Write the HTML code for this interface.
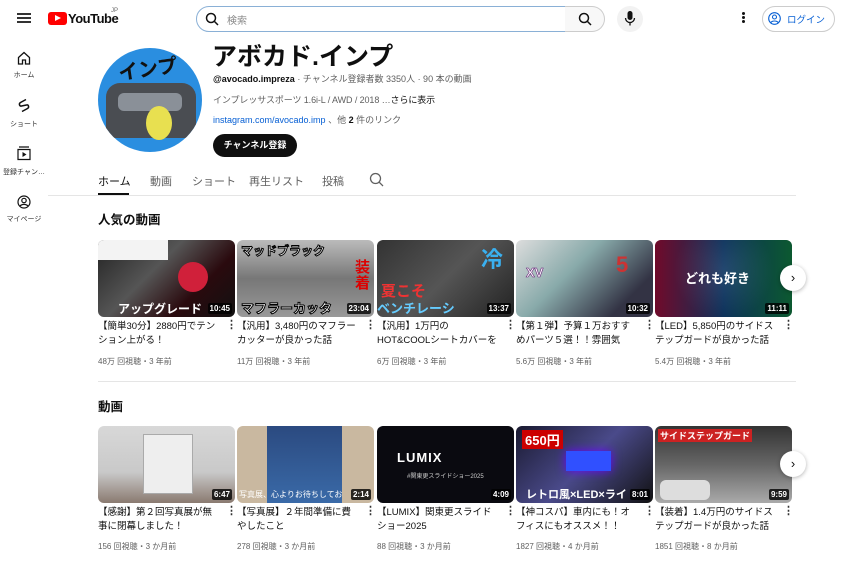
<!DOCTYPE html>
<html><head><meta charset="utf-8"><style>
*{margin:0;padding:0;box-sizing:border-box}
body{width:844px;height:563px;overflow:hidden;background:#fff;font-family:"Liberation Sans","Noto Sans CJK JP",sans-serif;color:#0f0f0f;position:relative}
.a{position:absolute}
.side div{position:absolute;width:48px;text-align:center;font-size:7px;color:#333}
.th{position:absolute;width:137px;height:77px;border-radius:6px;overflow:hidden}
.dur{position:absolute;right:3px;bottom:3px;background:rgba(0,0,0,.8);color:#fff;font-size:8px;font-weight:bold;padding:1px 2px;border-radius:2px}
.t{position:absolute;width:123px;height:28px;overflow:hidden;font-size:9.5px;line-height:14px;color:#0f0f0f}
.m{position:absolute;font-size:8px;color:#606060}
.dots{position:absolute;font-size:11px;font-weight:bold;color:#333}
.nx{position:absolute;width:26px;height:26px;border-radius:50%;background:#fff;box-shadow:0 1px 4px rgba(0,0,0,.3);text-align:center;line-height:25px;font-size:13px}
</style></head><body>
<!-- header -->
<div class="a" style="left:17px;top:13px;width:14px;height:2px;background:#333;box-shadow:0 4px 0 #333,0 8px 0 #333"></div>
<div class="a" style="left:48px;top:12px;width:19px;height:13px;background:#f00;border-radius:3px"></div>
<div class="a" style="left:55px;top:15px;width:0;height:0;border-left:6px solid #fff;border-top:3.5px solid transparent;border-bottom:3.5px solid transparent"></div>
<div class="a" style="left:68px;top:11px;font-size:13px;font-weight:bold;letter-spacing:-0.5px">YouTube</div>
<div class="a" style="left:111px;top:8px;font-size:6px;color:#666">JP</div>
<div class="a" style="left:196px;top:6px;width:370px;height:26px;border:1px solid #8ab0d6;border-radius:13px 0 0 13px"></div>
<svg class="a" style="left:205px;top:12px" width="14" height="14"><circle cx="6" cy="6" r="4.5" fill="none" stroke="#111" stroke-width="1.5"/><path d="M9.5 9.5L13 13" stroke="#111" stroke-width="1.5"/></svg>
<div class="a" style="left:227px;top:12px;font-size:10px;color:#888">検索</div>
<div class="a" style="left:565px;top:6px;width:40px;height:26px;border:1px solid #ccc;border-left:none;border-radius:0 13px 13px 0;background:#f8f8f8"></div>
<svg class="a" style="left:578px;top:12px" width="14" height="14"><circle cx="6" cy="6" r="4.5" fill="none" stroke="#111" stroke-width="1.5"/><path d="M9.5 9.5L13 13" stroke="#111" stroke-width="1.5"/></svg>
<div class="a" style="left:617px;top:6px;width:26px;height:26px;border-radius:50%;background:#f2f2f2"></div>
<svg class="a" style="left:624px;top:11px" width="12" height="16"><rect x="3.5" y="0" width="5" height="9" rx="2.5" fill="#111"/><path d="M1.5 7a4.5 4.5 0 009 0M6 11.5v3" stroke="#111" stroke-width="1.3" fill="none"/></svg>
<div class="a" style="left:742px;top:12px;width:3px;height:3px;background:#111;border-radius:50%;box-shadow:0 4px 0 #111,0 8px 0 #111"></div>
<div class="a" style="left:762px;top:6px;width:73px;height:26px;border:1px solid #ccc;border-radius:13px"></div>
<svg class="a" style="left:768px;top:12px" width="13" height="13"><circle cx="6.5" cy="6.5" r="5.8" fill="none" stroke="#065fd4" stroke-width="1.1"/><circle cx="6.5" cy="5" r="2" fill="none" stroke="#065fd4" stroke-width="1.1"/><path d="M2.8 10.5c1.5-2 5.9-2 7.4 0" stroke="#065fd4" fill="none" stroke-width="1.1"/></svg>
<div class="a" style="left:787px;top:12px;font-size:9.5px;color:#065fd4">ログイン</div>
<!-- sidebar -->
<div class="side">
<svg class="a" style="left:17px;top:51px" width="14" height="14"><path d="M1.5 6.5L7 1.5l5.5 5V13h-4V9h-3v4h-4z" fill="none" stroke="#111" stroke-width="1.3"/></svg>
<div style="left:0;top:70px">ホーム</div>
<svg class="a" style="left:17px;top:98px" width="14" height="15"><path d="M9 1.5L3.5 4.5c-2 1.2-1 4 1 3.5M5 13.5l5.5-3c2-1.2 1-4-1-3.5M4.5 8L9.5 7" fill="none" stroke="#111" stroke-width="1.5"/></svg>
<div style="left:0;top:119px">ショート</div>
<svg class="a" style="left:17px;top:146px" width="14" height="15"><path d="M2 1h10M1 3.5h12v10H1z" fill="none" stroke="#111" stroke-width="1.2"/><path d="M5.5 6v5l4-2.5z" fill="#111"/></svg>
<div style="left:0;top:167px">登録チャン…</div>
<svg class="a" style="left:17px;top:195px" width="14" height="14"><circle cx="7" cy="7" r="6" fill="none" stroke="#111" stroke-width="1.2"/><circle cx="7" cy="5.5" r="2.2" fill="none" stroke="#111" stroke-width="1.2"/><path d="M3 11c2-2.2 6-2.2 8 0" fill="none" stroke="#111" stroke-width="1.2"/></svg>
<div style="left:0;top:214px">マイページ</div>
</div>
<!-- channel -->
<div class="a" style="left:98px;top:48px;width:104px;height:104px;border-radius:50%;background:#2a8ee0;overflow:hidden">
<div class="a" style="left:8px;top:35px;width:90px;height:55px;background:#4a4d52;border-radius:14px 14px 6px 6px"></div>
<div class="a" style="left:20px;top:45px;width:64px;height:18px;background:#8a9098;border-radius:6px"></div>
<div class="a" style="left:48px;top:58px;width:26px;height:34px;background:#e8e050;border-radius:50%"></div>
<div class="a" style="left:20px;top:5px;font-size:20px;font-weight:bold;color:#111;transform:rotate(-8deg)">インプ</div>
</div>
<div class="a" style="left:212px;top:37px;font-size:25px;font-weight:bold">アボカド.インプ</div>
<div class="a" style="left:213px;top:72px;font-size:9px;color:#606060"><b style="color:#0f0f0f;font-weight:bold">@avocado.impreza</b> · チャンネル登録者数 3350人 · 90 本の動画</div>
<div class="a" style="left:213px;top:93px;font-size:9px;color:#606060;letter-spacing:-0.1px">インプレッサスポーツ 1.6i-L / AWD / 2018 …<span style="color:#0f0f0f">さらに表示</span></div>
<div class="a" style="left:213px;top:113px;font-size:9px;color:#606060"><span style="color:#065fd4">instagram.com/avocado.imp</span> 、他 <b style="color:#0f0f0f">2</b> 件のリンク</div>
<div class="a" style="left:213px;top:134px;width:84px;height:23px;background:#0f0f0f;border-radius:12px;color:#fff;font-size:9px;font-weight:bold;text-align:center;line-height:23px">チャンネル登録</div>
<!-- tabs -->
<div class="a" style="left:98px;top:173px;font-size:11px;color:#0f0f0f">ホーム</div>
<div class="a" style="left:150px;top:173px;font-size:11px;color:#606060">動画</div>
<div class="a" style="left:192px;top:173px;font-size:11px;color:#606060">ショート</div>
<div class="a" style="left:249px;top:173px;font-size:11px;color:#606060">再生リスト</div>
<div class="a" style="left:322px;top:173px;font-size:11px;color:#606060">投稿</div>
<svg class="a" style="left:369px;top:172px" width="15" height="15"><circle cx="6.5" cy="6.5" r="5" fill="none" stroke="#606060" stroke-width="1.3"/><path d="M10 10l4 4" stroke="#606060" stroke-width="1.3"/></svg>
<div class="a" style="left:98px;top:193px;width:31px;height:2px;background:#0f0f0f"></div>
<div class="a" style="left:48px;top:195px;width:748px;height:1px;background:#e5e5e5"></div>
<div class="a" style="left:98px;top:209px;font-size:12.5px;font-weight:bold">人気の動画</div>
<div class="a" style="left:98px;top:381px;width:698px;height:1px;background:#e5e5e5"></div>
<div class="a" style="left:98px;top:396px;font-size:12.5px;font-weight:bold">動画</div>

<!-- row1 -->
<div class="th" style="left:98px;top:240px;background:linear-gradient(135deg,#222 0%,#555 40%,#2a0a0e 70%,#111)"><div class="a" style="left:0;top:0;width:70px;height:20px;background:#f3f3f3"></div><div class="a" style="left:80px;top:22px;width:30px;height:30px;border-radius:50%;background:#d0203a"></div><div class="a" style="left:20px;top:60px;color:#fff;font-weight:bold;font-size:12px">アップグレード</div><span class="dur">10:45</span></div>
<div class="th" style="left:237px;top:240px;background:linear-gradient(180deg,#bbb,#777 50%,#999)"><div class="a" style="left:4px;top:2px;color:#fff;font-size:12px;font-weight:bold;-webkit-text-stroke:1px #000">マッドブラック</div><div class="a" style="left:4px;top:58px;color:#fff;font-size:13px;font-weight:bold;-webkit-text-stroke:1px #000">マフラーカッタ</div><div class="a" style="left:118px;top:20px;color:#d00;font-size:15px;font-weight:bold;width:16px;line-height:16px">装着</div><span class="dur">23:04</span></div>
<div class="th" style="left:377px;top:240px;background:linear-gradient(135deg,#333,#555 50%,#222)"><div class="a" style="left:104px;top:2px;color:#3ab0f0;font-size:22px;font-weight:bold">冷</div><div class="a" style="left:4px;top:40px;color:#e33;font-size:15px;font-weight:bold">夏こそ</div><div class="a" style="left:0;top:58px;color:#6cf;font-size:13px;font-weight:bold">ベンチレーシ</div><span class="dur">13:37</span></div>
<div class="th" style="left:516px;top:240px;background:linear-gradient(135deg,#ddd,#8aa 40%,#334 80%)"><div class="a" style="left:100px;top:12px;color:#c33;font-size:22px;font-weight:bold">5</div><div class="a" style="left:10px;top:25px;color:#fff;font-size:13px;font-weight:bold;-webkit-text-stroke:.6px #627">XV</div><span class="dur">10:32</span></div>
<div class="th" style="left:655px;top:240px;background:radial-gradient(circle at 50% 40%,#333,#111 60%),#111"><div class="a" style="left:0;top:0;width:137px;height:77px;background:linear-gradient(90deg,rgba(255,0,80,.4),rgba(0,120,255,.3),rgba(0,255,120,.3))"></div><div class="a" style="left:30px;top:28px;color:#fff;font-size:13px;font-weight:bold">どれも好き</div><span class="dur">11:11</span></div>
<div class="nx" style="left:780px;top:265px">›</div>

<div class="t" style="left:98px;top:320px">【簡単30分】2880円でテンション上がる！</div>
<div class="t" style="left:237px;top:320px">【汎用】3,480円のマフラーカッターが良かった話</div>
<div class="t" style="left:377px;top:320px">【汎用】1万円のHOT&amp;COOLシートカバーを装着してみ…</div>
<div class="t" style="left:516px;top:320px">【第１弾】予算１万おすすめパーツ５選！！雰囲気向…</div>
<div class="t" style="left:655px;top:320px">【LED】5,850円のサイドステップガードが良かった話</div>
<div class="dots" style="left:226px;top:318px">⋮</div><div class="dots" style="left:365px;top:318px">⋮</div><div class="dots" style="left:505px;top:318px">⋮</div><div class="dots" style="left:644px;top:318px">⋮</div><div class="dots" style="left:783px;top:318px">⋮</div>
<div class="m" style="left:98px;top:356px">48万 回視聴・3 年前</div>
<div class="m" style="left:237px;top:356px">11万 回視聴・3 年前</div>
<div class="m" style="left:377px;top:356px">6万 回視聴・3 年前</div>
<div class="m" style="left:516px;top:356px">5.6万 回視聴・3 年前</div>
<div class="m" style="left:655px;top:356px">5.4万 回視聴・3 年前</div>

<!-- row2 -->
<div class="th" style="left:98px;top:426px;background:linear-gradient(180deg,#d8d8d8,#c9c9c9 60%,#8a7a70)"><div class="a" style="left:45px;top:8px;width:50px;height:60px;background:#eee;border:1px solid #aaa"></div><span class="dur">6:47</span></div>
<div class="th" style="left:237px;top:426px;background:#c9b8a0"><div class="a" style="left:30px;top:0;width:75px;height:77px;background:linear-gradient(180deg,#2b4a80,#3a6aa8)"></div><div class="a" style="left:2px;top:63px;color:#fff;font-size:8px">写真展、心よりお待ちしてお</div><span class="dur">2:14</span></div>
<div class="th" style="left:377px;top:426px;background:#0a0a10"><div class="a" style="left:20px;top:24px;color:#fff;font-size:13px;font-weight:bold;letter-spacing:1px">LUMIX</div><div class="a" style="left:30px;top:45px;color:#ccc;font-size:6px">#関東更スライドショー2025</div><span class="dur">4:09</span></div>
<div class="th" style="left:516px;top:426px;background:linear-gradient(135deg,#1a1a30,#4a4a8a 50%,#111)"><div class="a" style="left:6px;top:4px;color:#fff;background:#c00;font-size:13px;font-weight:bold;padding:0 3px">650円</div><div class="a" style="left:50px;top:25px;width:45px;height:20px;background:#3050ff;box-shadow:0 0 10px #60f"></div><div class="a" style="left:10px;top:60px;color:#fff;font-size:11px;font-weight:bold">レトロ風×LED×ライ</div><span class="dur">8:01</span></div>
<div class="th" style="left:655px;top:426px;background:linear-gradient(180deg,#333,#666 50%,#aaa)"><div class="a" style="left:3px;top:3px;color:#fff;background:#c22;font-size:9px;font-weight:bold;padding:0 2px">サイドステップガード</div><div class="a" style="left:5px;top:54px;width:50px;height:20px;background:#ddd;border-radius:6px"></div><span class="dur">9:59</span></div>
<div class="nx" style="left:780px;top:451px">›</div>

<div class="t" style="left:98px;top:506px">【感謝】第２回写真展が無事に閉幕しました！</div>
<div class="t" style="left:237px;top:506px">【写真展】２年間準備に費やしたこと</div>
<div class="t" style="left:377px;top:506px">【LUMIX】関東更スライドショー2025</div>
<div class="t" style="left:516px;top:506px">【神コスパ】車内にも！オフィスにもオススメ！！</div>
<div class="t" style="left:655px;top:506px">【装着】1.4万円のサイドステップガードが良かった話</div>
<div class="dots" style="left:226px;top:504px">⋮</div><div class="dots" style="left:365px;top:504px">⋮</div><div class="dots" style="left:505px;top:504px">⋮</div><div class="dots" style="left:644px;top:504px">⋮</div><div class="dots" style="left:783px;top:504px">⋮</div>
<div class="m" style="left:98px;top:541px">156 回視聴・3 か月前</div>
<div class="m" style="left:237px;top:541px">278 回視聴・3 か月前</div>
<div class="m" style="left:377px;top:541px">88 回視聴・3 か月前</div>
<div class="m" style="left:516px;top:541px">1827 回視聴・4 か月前</div>
<div class="m" style="left:655px;top:541px">1851 回視聴・8 か月前</div>
</body></html>
